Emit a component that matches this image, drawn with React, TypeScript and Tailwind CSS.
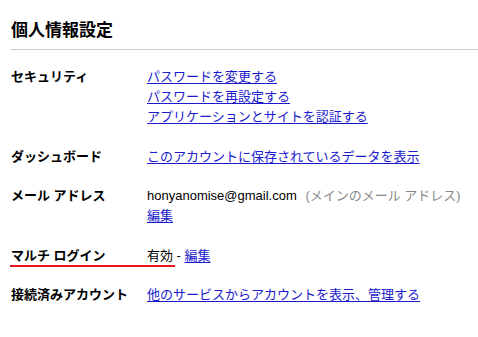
import React from 'react';

const font = { fontFamily: '"Liberation Sans", "Noto Sans CJK JP", sans-serif' };

function Row({ label, children, mark }: { label: string; children: React.ReactNode; mark?: boolean }) {
    return (
        <div className="relative flex">
            <div className="w-[136px] shrink-0 font-bold">{label}</div>
            <div className="flex flex-col">{children}</div>
            {mark && <div className="absolute left-[-1px] top-[19px] h-[2px] w-[165px] bg-[#e8141c]"></div>}
        </div>
    );
}

const linkClass = 'text-[#1a1acc] underline underline-offset-2';

export default function App() {
    return (
        <div className="w-[478px] h-[337px] bg-white text-black text-[13px] leading-[20px]" style={font}>
            <div className="pl-[11px]">
                <h1 className="pt-[19px] pb-[6px] text-[17px] leading-[24px] font-bold border-b border-[#cccccc]">個人情報設定</h1>
                <div className="mt-[17px] flex flex-col gap-[19.5px]">
                    <Row label="セキュリティ">
                        <a href="#" className={linkClass}>パスワードを変更する</a>
                        <a href="#" className={linkClass}>パスワードを再設定する</a>
                        <a href="#" className={linkClass}>アプリケーションとサイトを認証する</a>
                    </Row>
                    <Row label="ダッシュボード">
                        <a href="#" className={linkClass}>このアカウントに保存されているデータを表示</a>
                    </Row>
                    <Row label="メール アドレス">
                        <div>
                            honyanomise@gmail.com <span className="ml-[5px] text-[#888888]">(メインのメール アドレス)</span>
                        </div>
                        <div>
                            <a href="#" className={linkClass}>編集</a>
                        </div>
                    </Row>
                    <Row label="マルチ ログイン" mark>
                        <div>
                            有効 - <a href="#" className={linkClass}>編集</a>
                        </div>
                    </Row>
                    <Row label="接続済みアカウント">
                        <a href="#" className={linkClass}>他のサービスからアカウントを表示、管理する</a>
                    </Row>
                </div>
            </div>
        </div>
    );
}
